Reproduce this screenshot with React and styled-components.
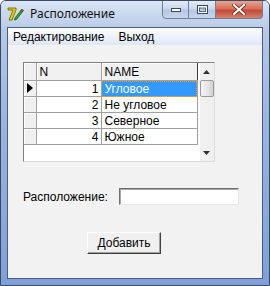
import styled, { createGlobalStyle } from "styled-components";

const GlobalStyle = createGlobalStyle`
  html, body {
    margin: 0;
    padding: 0;
    background: #ffffff;
  }
`;

const Window = styled.div`
  width: 270px;
  height: 286px;
  box-sizing: border-box;
  border: 1px solid #3a4a66;
  border-radius: 6px 6px 0 0;
  background: linear-gradient(180deg, #c6d6ec 0%, #b4c8e6 12%, #9db6e0 40%, #7f9fd6 100%);
  display: flex;
  flex-direction: column;
  overflow: hidden;
  font-family: "Liberation Sans", Arial, sans-serif;
`;

const TitleBar = styled.div`
  height: 26px;
  display: flex;
  align-items: flex-start;
  padding-left: 6px;
  background: linear-gradient(180deg, #dbe6f4 0%, #c9d8ee 50%, #bccde9 100%);
`;

const TitleIcon = styled.svg`
  margin-top: 5px;
  width: 17px;
  height: 16px;
  flex: none;
`;

const TitleText = styled.span`
  margin: 5px 0 0 6px;
  font-size: 12px;
  font-family: "Noto Sans", "Liberation Sans", sans-serif;
  color: #111;
  line-height: 16px;
  flex: 1;
`;

const Controls = styled.div`
  display: flex;
  margin-right: 6px;
  margin-top: -1px;
`;

const CtlButton = styled.div`
  width: ${(p) => p.w}px;
  height: 19px;
  box-sizing: border-box;
  border: 1px solid #6d7f9c;
  border-left-width: ${(p) => (p.first ? 1 : 0)}px;
  border-radius: ${(p) => (p.first ? "0 0 0 4px" : p.last ? "0 0 4px 0" : "0")};
  background: ${(p) =>
    p.close
      ? "linear-gradient(180deg, #e8a493 0%, #d8705c 45%, #c44a35 55%, #d6826e 100%)"
      : "linear-gradient(180deg, #e4ebf5 0%, #ccd8ea 45%, #b6c6e0 55%, #c8d6ec 100%)"};
  display: flex;
  align-items: center;
  justify-content: center;
`;

const Frame = styled.div`
  flex: 1;
  display: flex;
  flex-direction: column;
  padding: 0 6px 6px 6px;
`;

const Inner = styled.div`
  flex: 1;
  display: flex;
  flex-direction: column;
  border: 1px solid #4a5d80;
  background: #f0f0f0;
`;

const MenuBar = styled.div`
  height: 17px;
  display: flex;
  align-items: center;
  gap: 14px;
  padding-left: 5px;
  background: linear-gradient(180deg, #fbfcfe 0%, #eef2fa 50%, #dfe7f5 100%);
  font-size: 12px;
  color: #000;
`;

const Client = styled.div`
  flex: 1;
  display: flex;
  flex-direction: column;
  padding: 17px 0 0 15px;
  background: #f2f2f2;
`;

const Grid = styled.div`
  width: 192px;
  height: 100px;
  box-sizing: border-box;
  border-top: 1px solid #808080;
  border-left: 1px solid #808080;
  border-right: 1px solid #dcdcdc;
  border-bottom: 1px solid #dcdcdc;
  background: #ffffff;
  display: flex;
`;

const Table = styled.table`
  border-collapse: collapse;
  table-layout: fixed;
  width: 173px;
  height: fit-content;
  font-size: 12px;
  font-family: "Liberation Sans", Arial, sans-serif;
`;

const HeadCell = styled.th`
  height: 17px;
  padding: 0 3px;
  text-align: left;
  font-weight: normal;
  background: #f0f0f0;
  border-right: 1px solid ${(p) => (p.dark ? "#404040" : "#a0a0a0")};
  border-bottom: 1px solid #a0a0a0;
  box-shadow: inset 1px 1px 0 #ffffff;
  color: #000;
`;

const IndCell = styled.td`
  height: 15px;
  padding: 0;
  background: #f0f0f0;
  border-right: 1px solid #a0a0a0;
  border-bottom: 1px solid #a0a0a0;
  box-shadow: inset 1px 1px 0 #ffffff;
  text-align: center;
  vertical-align: middle;
`;

const Cell = styled.td`
  height: 15px;
  padding: 0 2px 0 3px;
  border-right: 1px solid #a0a0a0;
  border-bottom: 1px solid #a0a0a0;
  text-align: ${(p) => (p.num ? "right" : "left")};
  white-space: nowrap;
  overflow: hidden;
  background: ${(p) => (p.sel ? "#3399ff" : "#ffffff")};
  color: ${(p) => (p.sel ? "#ffffff" : "#000")};
  outline: ${(p) => (p.sel ? "1px dotted #ff9900" : "none")};
  outline-offset: -1px;
`;

const ScrollBar = styled.div`
  width: 17px;
  margin-left: 2px;
  display: flex;
  flex-direction: column;
  background: #f0f0f0;
`;

const Arrow = styled.div`
  height: 17px;
  display: flex;
  align-items: center;
  justify-content: center;
`;

const Thumb = styled.div`
  height: 17px;
  box-sizing: border-box;
  border: 1px solid #9a9a9a;
  border-radius: 2px;
  background: linear-gradient(90deg, #f4f4f4 0%, #e4e4e4 60%, #cfcfcf 100%);
`;

const Track = styled.div`
  flex: 1;
`;

const FieldRow = styled.div`
  display: flex;
  align-items: center;
  margin-top: 26px;
`;

const Label = styled.span`
  font-size: 12px;
  color: #000;
  width: 96px;
`;

const Edit = styled.div`
  width: 120px;
  height: 17px;
  box-sizing: border-box;
  background: #ffffff;
  border-top: 1px solid #6e6e6e;
  border-left: 1px solid #6e6e6e;
  border-right: 1px solid #e6e6e6;
  border-bottom: 1px solid #e6e6e6;
  box-shadow: inset 1px 1px 0 #a8a8a8;
`;

const Button = styled.button`
  margin: 27px 0 0 64px;
  width: 74px;
  height: 22px;
  padding: 0;
  font-size: 12px;
  font-family: "Liberation Sans", Arial, sans-serif;
  color: #000;
  background: #f0f0f0;
  border-top: 1px solid #ffffff;
  border-left: 1px solid #ffffff;
  border-right: 1px solid #404040;
  border-bottom: 1px solid #404040;
  box-shadow: inset -1px -1px 0 #a0a0a0;
`;

const rows = [
  { n: 1, name: "Угловое" },
  { n: 2, name: "Не угловое" },
  { n: 3, name: "Северное" },
  { n: 4, name: "Южное" },
];

export default function App() {
  return (
    <>
      <GlobalStyle />
      <Window>
        <TitleBar>
          <TitleIcon viewBox="0 0 17 16">
            <path d="M1 2 L9 2 L9 4 L5 14 L2 14 L6 4 L1 4 Z" fill="#e8d000" stroke="#6a5a00" strokeWidth="0.8" />
            <path d="M8 12 L15 3 L16.5 4.5 L9.5 13.5 L7.5 14 Z" fill="#3aa030" stroke="#1e5a18" strokeWidth="0.8" />
            <path d="M14 4 L15.5 5.5" stroke="#c02020" strokeWidth="1.5" />
          </TitleIcon>
          <TitleText>Расположение</TitleText>
          <Controls>
            <CtlButton w={27} first>
              <svg width="10" height="4" viewBox="0 0 10 4">
                <rect x="0.5" y="0.5" width="9" height="3" fill="#fff" stroke="#3a4a66" />
              </svg>
            </CtlButton>
            <CtlButton w={27}>
              <svg width="11" height="9" viewBox="0 0 11 9">
                <rect x="0.5" y="0.5" width="10" height="8" fill="#fff" stroke="#3a4a66" />
                <rect x="2.5" y="3" width="6" height="3.5" fill="#b8c8e2" stroke="#3a4a66" strokeWidth="0.8" />
              </svg>
            </CtlButton>
            <CtlButton w={47} close last>
              <svg width="14" height="11" viewBox="0 0 14 11">
                <path d="M2 1 L12 10 M12 1 L2 10" stroke="#5a1a10" strokeWidth="3.6" strokeLinecap="square" />
                <path d="M2 1 L12 10 M12 1 L2 10" stroke="#ffffff" strokeWidth="2.2" strokeLinecap="square" />
              </svg>
            </CtlButton>
          </Controls>
        </TitleBar>
        <Frame>
          <Inner>
            <MenuBar>
              <span>Редактирование</span>
              <span>Выход</span>
            </MenuBar>
            <Client>
              <Grid>
                <Table>
                  <colgroup>
                    <col style={{ width: 12 }} />
                    <col style={{ width: 65 }} />
                    <col style={{ width: 96 }} />
                  </colgroup>
                  <thead>
                    <tr>
                      <HeadCell />
                      <HeadCell>N</HeadCell>
                      <HeadCell dark>NAME</HeadCell>
                    </tr>
                  </thead>
                  <tbody>
                    {rows.map((r, i) => (
                      <tr key={r.n}>
                        <IndCell>
                          {i === 0 && (
                            <svg width="6" height="10" viewBox="0 0 6 10">
                              <path d="M0 0 L6 5 L0 10 Z" fill="#000" />
                            </svg>
                          )}
                        </IndCell>
                        <Cell num>{r.n}</Cell>
                        <Cell sel={i === 0}>{r.name}</Cell>
                      </tr>
                    ))}
                  </tbody>
                </Table>
                <ScrollBar>
                  <Arrow>
                    <svg width="7" height="4" viewBox="0 0 7 4">
                      <path d="M0 4 L3.5 0 L7 4 Z" fill="#303030" />
                    </svg>
                  </Arrow>
                  <Thumb />
                  <Track />
                  <Arrow>
                    <svg width="7" height="4" viewBox="0 0 7 4">
                      <path d="M0 0 L7 0 L3.5 4 Z" fill="#303030" />
                    </svg>
                  </Arrow>
                </ScrollBar>
              </Grid>
              <FieldRow>
                <Label>Расположение:</Label>
                <Edit />
              </FieldRow>
              <Button>Добавить</Button>
            </Client>
          </Inner>
        </Frame>
      </Window>
    </>
  );
}
